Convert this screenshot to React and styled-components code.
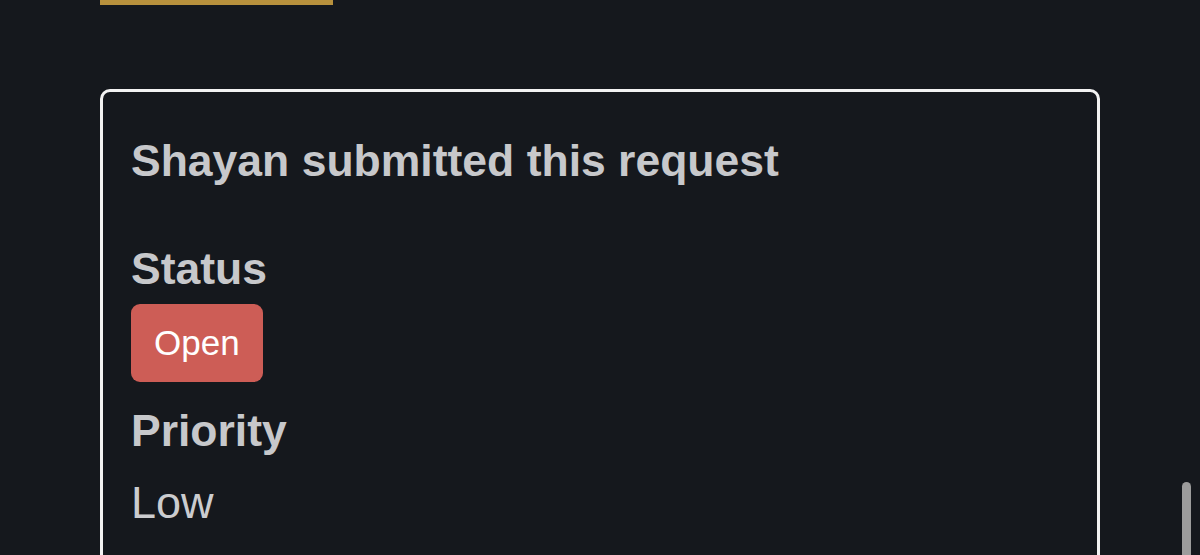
import React from 'react'
import styled, { createGlobalStyle } from 'styled-components'

const GlobalStyle = createGlobalStyle`
    html, body {
        margin: 0;
        padding: 0;
        background: #15181d;
        overflow: hidden;
    }
    * {
        box-sizing: border-box;
    }
`

function App() {
  return (
    <Page>
        <GlobalStyle />
        <GoldBar />
        <Card>
            <Title>Shayan submitted this request</Title>
            <Label>Status</Label>
            <Badge color="#cd5d56">Open</Badge>
            <Label spaced>Priority</Label>
            <Value>Low</Value>
        </Card>
        <ScrollThumb />
    </Page>
  )
}

export default App

const Page = styled.div`
    position: relative;
    height: 555px;
    overflow: hidden;
    padding-left: 100px;
    font-family: "Liberation Sans", Arial, Helvetica, sans-serif;
    color: #c7c8cb;
`

const GoldBar = styled.div`
    width: 233px;
    height: 5px;
    background: #b8913d;
`

const Card = styled.div`
    width: 1000px;
    min-height: 620px;
    margin-top: 84px;
    border: 3px solid #f2f2f2;
    border-radius: 10px;
    padding: 44px 28px 0;
    display: flex;
    flex-direction: column;
    align-items: flex-start;
`

const Title = styled.h2`
    margin: 0 0 58px;
    font-size: 44.5px;
    line-height: 50px;
    font-weight: 700;
`

const Label = styled.h3`
    margin: ${props => props.spaced ? '24px 0 0' : '0'};
    font-size: 44.5px;
    line-height: 50px;
    font-weight: 700;
`

const Badge = styled.span`
    margin-top: 10px;
    height: 78px;
    padding: 0 23px;
    display: inline-flex;
    align-items: center;
    border-radius: 9px;
    background: ${props => props.color};
    color: #ffffff;
    font-size: 35px;
`

const Value = styled.div`
    margin-top: 22px;
    font-size: 45px;
    line-height: 50px;
    font-weight: 400;
    color: #cbcccf;
`

const ScrollThumb = styled.div`
    position: absolute;
    left: 1182px;
    top: 482px;
    width: 9px;
    height: 120px;
    border-radius: 5px;
    background: #9c9c9c;
`
